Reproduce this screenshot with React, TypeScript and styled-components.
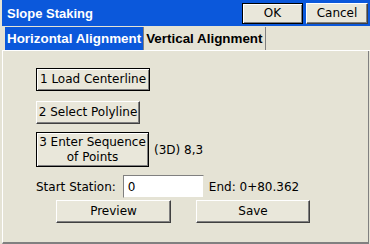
import React from "react";
import styled, { createGlobalStyle } from "styled-components";

const Global = createGlobalStyle`
  html, body { margin: 0; padding: 0; background: #e5e3d5; }
  body { font-family: "DejaVu Sans", "Liberation Sans", sans-serif; font-size: 12px; color: #000; }
`;

const Window = styled.div`
  width: 370px;
  height: 244px;
  box-sizing: border-box;
  background: #e5e3d5;
  display: flex;
  flex-direction: column;
  padding: 0 0 0 2px;
  overflow: hidden;
`;

const TitleBar = styled.div`
  height: 26px;
  background: #0b58db;
  display: flex;
  align-items: center;
  padding: 0 2px 0 5px;
`;

const Title = styled.div`
  flex: 1;
  color: #fff;
  font-family: "Liberation Sans", Arial, sans-serif;
  font-weight: bold;
  font-size: 13px;
`;

const Btn = styled.button<{ $w: number; $h?: number; $def?: boolean }>`
  width: ${(p) => p.$w}px;
  height: ${(p) => p.$h ?? 23}px;
  margin: 0;
  padding: 0;
  box-sizing: border-box;
  font-family: inherit;
  font-size: 12px;
  line-height: 15px;
  color: #000;
  background: #e9e7da;
  border: 1px solid;
  border-color: ${(p) => (p.$def ? "#000" : "#fff #404040 #404040 #fff")};
  box-shadow: ${(p) =>
    p.$def ? "inset 1px 1px #fff, inset -1px -1px #808080" : "inset -1px -1px #808080"};
  text-align: center;
`;

const TitleBtns = styled.div`
  display: flex;
  gap: 3px;
`;

const TabStrip = styled.div`
  display: flex;
  padding: 1px 0 0 3px;
  height: 23px;
  border-bottom: 1px solid #fff;
`;

const Tab = styled.div<{ $active?: boolean }>`
  display: flex;
  align-items: center;
  padding: 0 2px;
  font-family: "Liberation Sans", Arial, sans-serif;
  font-weight: bold;
  font-size: 13.4px;
  background: ${(p) => (p.$active ? "#0b58db" : "transparent")};
  color: ${(p) => (p.$active ? "#fff" : "#000")};
  border-right: 1px solid #808080;
`;

const Panel = styled.div`
  flex: 1;
  display: flex;
  flex-direction: column;
  padding: 0 0 0 33px;
  border-left: 1px solid #fff;
  border-right: 1px solid #808080;
  border-bottom: 2px solid #808080;
  margin-right: 1px;
`;

const Row = styled.div<{ $mt: number }>`
  display: flex;
  align-items: center;
  margin-top: ${(p) => p.$mt}px;
`;

const Label = styled.span<{ $ml?: number }>`
  margin-left: ${(p) => p.$ml ?? 0}px;
  white-space: nowrap;
`;

const Input = styled.div`
  width: 81px;
  height: 23px;
  box-sizing: border-box;
  background: #fff;
  border: 1px solid;
  border-color: #808080 #e5e3d5 #e5e3d5 #808080;
  display: flex;
  align-items: center;
  padding-left: 4px;
  margin-left: 7px;
`;

const BottomRow = styled.div`
  display: flex;
  gap: 25px;
  margin-top: 2px;
  margin-left: 20px;
`;

export default function App() {
  return (
    <>
      <Global />
      <Window>
        <TitleBar>
          <Title>Slope Staking</Title>
          <TitleBtns>
            <Btn $w={61} $h={21} $def>OK</Btn>
            <Btn $w={62} $h={21}>Cancel</Btn>
          </TitleBtns>
        </TitleBar>
        <TabStrip>
          <Tab $active>Horizontal Alignment</Tab>
          <Tab>Vertical Alignment</Tab>
        </TabStrip>
        <Panel>
          <Row $mt={17}>
            <Btn $w={114} $def>1 Load Centerline</Btn>
          </Row>
          <Row $mt={10}>
            <Btn $w={104}>2 Select Polyline</Btn>
          </Row>
          <Row $mt={8}>
            <Btn $w={113} $h={35} $def>3 Enter Sequence<br />of Points</Btn>
            <Label $ml={5}>(3D) 8,3</Label>
          </Row>
          <Row $mt={8}>
            <Label>Start Station:</Label>
            <Input>0</Input>
            <Label $ml={5}>End: 0+80.362</Label>
          </Row>
          <BottomRow>
            <Btn $w={115}>Preview</Btn>
            <Btn $w={114}>Save</Btn>
          </BottomRow>
        </Panel>
      </Window>
    </>
  );
}
